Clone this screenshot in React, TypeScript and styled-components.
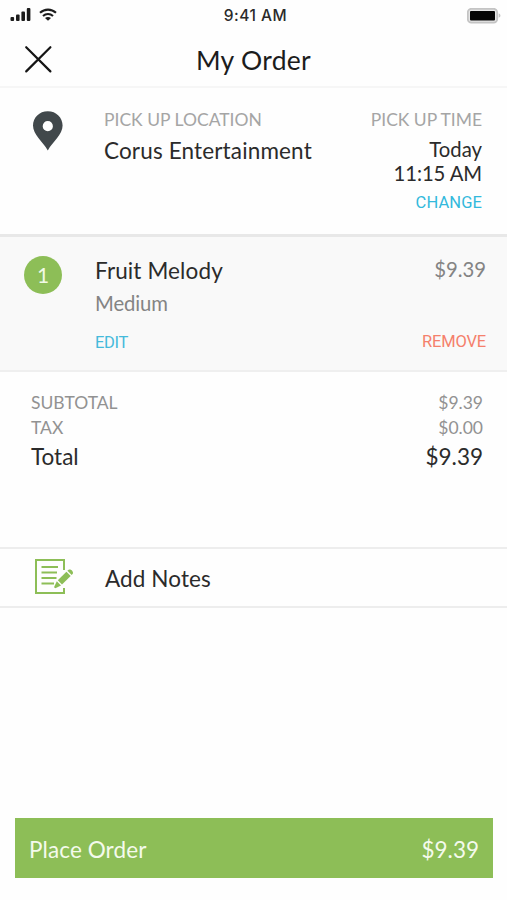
import React from "react";
import styled, { createGlobalStyle } from "styled-components";

const GlobalStyle = createGlobalStyle`
  *, *::before, *::after { box-sizing: border-box; }
  body { margin: 0; background: #fff; }
`;

const green = "#8dbe57";

const Screen = styled.main`
  display: flex;
  flex-direction: column;
  width: 507px;
  height: 900px;
  background: #fefefe;
  font-family: Lato, sans-serif;
  color: #2b2b2b;
`;

const StatusBar = styled.div`
  display: grid;
  grid-template-columns: 1fr auto 1fr;
  align-items: center;
  height: 30px;
  padding: 0 6px 0 10px;
`;

const Signals = styled.div`
  display: flex;
  align-items: center;
  gap: 8px;
  padding-bottom: 2px;
`;

const Clock = styled.span`
  font: 500 15.5px/30px Inter, sans-serif;
  letter-spacing: 0.5px;
  color: #2a2a2a;
  white-space: nowrap;
  padding-top: 1px;
`;

const BatteryIcon = styled.svg`
  justify-self: end;
`;

const Header = styled.header`
  display: grid;
  grid-template-columns: 80px 1fr 80px;
  align-items: center;
  height: 58px;
  border-bottom: 2px solid #f6f6f6;
`;

const CloseButton = styled.button`
  display: flex;
  width: 28px;
  height: 28px;
  margin: 2px 0 0 24px;
  padding: 0;
  border: 0;
  background: none;
`;

const Title = styled.h1`
  margin: 0;
  padding-top: 4px;
  font-size: 26.5px;
  font-weight: 400;
  line-height: 40px;
  letter-spacing: 0.3px;
  text-align: center;
  color: #1c1c1c;
`;

const Text = styled.span<{ $size: number; $line: number; $color?: string; $spacing?: number }>`
  display: block;
  font-size: ${(p) => p.$size}px;
  line-height: ${(p) => p.$line}px;
  color: ${(p) => p.$color ?? "#2b2b2b"};
  letter-spacing: ${(p) => p.$spacing ?? 0}px;
  white-space: nowrap;
`;

const Action = styled.button<{ $color: string; $spacing?: number }>`
  margin: 0;
  padding: 0;
  border: 0;
  background: none;
  font: 400 16.5px/24px Roboto, sans-serif;
  letter-spacing: ${(p) => p.$spacing ?? 0}px;
  color: ${(p) => p.$color};
`;

const Pickup = styled.section`
  display: grid;
  grid-template-columns: 72px 1fr auto;
  height: 149px;
  padding: 20px 25px 0 32px;
  border-bottom: 3px solid #e8e8e8;
`;

const PinIcon = styled.svg`
  margin-top: 2px;
`;

const Stack = styled.div<{ $end?: boolean; $gap?: number }>`
  display: flex;
  flex-direction: column;
  align-items: ${(p) => (p.$end ? "flex-end" : "flex-start")};
  gap: ${(p) => p.$gap ?? 0}px;
`;

const PickupTime = styled.div`
  padding: 5px 0 6px;
  text-align: right;
`;

const Item = styled.section`
  display: grid;
  grid-template-columns: 71px 1fr auto;
  height: 135px;
  padding: 18px 21px 0 24px;
  background: #f9f9f9;
  border-bottom: 2px solid #efefef;
`;

const Quantity = styled.span`
  display: flex;
  align-items: center;
  justify-content: center;
  width: 38px;
  height: 38px;
  margin-top: 0.5px;
  border-radius: 50%;
  background: ${green};
  color: #f1f9e6;
  font-size: 21px;
`;

const ItemColumn = styled.div<{ $end?: boolean }>`
  display: flex;
  flex-direction: column;
  justify-content: space-between;
  align-items: ${(p) => (p.$end ? "flex-end" : "flex-start")};
  height: ${(p) => (p.$end ? 99 : 100)}px;
  padding-top: ${(p) => (p.$end ? 0 : 2)}px;
`;

const Summary = styled.section`
  height: 175px;
  padding: 18px 24px 0 31px;
`;

const SummaryRow = styled.div`
  display: flex;
  justify-content: space-between;
`;

const Notes = styled.section`
  display: flex;
  align-items: center;
  gap: 31px;
  height: 61px;
  padding: 2px 0 0 34px;
  border: solid #ededed;
  border-width: 2px 0;
`;

const NotesIcon = styled.svg`
  margin-top: -4px;
`;

const PlaceOrder = styled.button`
  display: flex;
  align-items: center;
  justify-content: space-between;
  height: 60px;
  margin: auto 14px 22px 15px;
  padding: 4px 14px 0;
  border: 0;
  background: ${green};
  font-family: inherit;
`;

export default function App() {
  return (
    <>
      <GlobalStyle />
      <Screen>
        <StatusBar>
          <Signals>
            <svg width="21" height="14" viewBox="0 0 21 14" fill="#1c1c1c">
              <rect x="0.5" y="9" width="3.6" height="4" rx="1" />
              <rect x="6" y="6.5" width="3.6" height="6.5" rx="1" />
              <rect x="11.4" y="3.5" width="3.6" height="9.5" rx="1" />
              <rect x="16.8" y="0" width="3.6" height="13" rx="1" />
            </svg>
            <svg width="18" height="14" viewBox="0 0 18 14" fill="none" stroke="#1c1c1c" strokeWidth="2.1">
              <path d="M1 4.8C5.6 0.5 12.4 0.5 17 4.8" />
              <path d="M4 8C6.9 5.3 11.1 5.3 14 8" />
              <path d="M9 12.8 6 10C7.8 8.5 10.2 8.5 12 10Z" fill="#1c1c1c" stroke="none" />
            </svg>
          </Signals>
          <Clock>9:41 AM</Clock>
          <BatteryIcon width="34" height="16" viewBox="0 0 34 16">
            <rect x="0.8" y="0.8" width="29.4" height="13.8" rx="3.6" fill="#e6e6e6" stroke="#c4c4c4" strokeWidth="1.8" />
            <rect x="3" y="3" width="25" height="9.4" rx="1" fill="#050505" />
            <path d="M31.7 5.6C34 6.2 34 9.2 31.7 9.8Z" fill="#c4c4c4" />
          </BatteryIcon>
        </StatusBar>

        <Header>
          <CloseButton aria-label="Close">
            <svg width="28" height="28" viewBox="0 0 28 28" stroke="#151515" strokeWidth="2.2" strokeLinecap="round">
              <path d="M2.2 2.2 26.4 26.4M26.4 2.2 2.2 26.4" />
            </svg>
          </CloseButton>
          <Title>My Order</Title>
        </Header>

        <Pickup>
          <PinIcon width="32" height="42" viewBox="0 0 32 42">
            <path
              fillRule="evenodd"
              d="M15.8 1.2C7.3 1.2 1 7.6 1 15.6 1 24.5 10.6 31.5 15.8 40.5 21 31.5 30.6 24.5 30.6 15.6 30.6 7.6 24.3 1.2 15.8 1.2ZM15.8 11.1A5.1 5.1 0 1 1 15.8 21.3 5.1 5.1 0 1 1 15.8 11.1Z"
              fill="#41484b"
            />
          </PinIcon>
          <Stack $gap={3}>
            <Text $size={17.5} $line={24} $color="#a5a5a5">PICK UP LOCATION</Text>
            <Text $size={22.5} $line={32} $spacing={0.15}>Corus Entertainment</Text>
          </Stack>
          <Stack $end>
            <Text $size={17.5} $line={24} $color="#a5a5a5" $spacing={-0.04}>PICK UP TIME</Text>
            <PickupTime>
              <Text $size={20.3} $line={24}>Today</Text>
              <Text $size={20.3} $line={24} $spacing={-0.1}>11:15 AM</Text>
            </PickupTime>
            <Action $color="#33b9dc" $spacing={0.1}>CHANGE</Action>
          </Stack>
        </Pickup>

        <Item>
          <Quantity>1</Quantity>
          <ItemColumn>
            <Stack $gap={4}>
              <Text $size={22.5} $line={28} $spacing={0.12}>Fruit Melody</Text>
              <Text $size={20.3} $line={28} $color="#848484" $spacing={-0.1}>Medium</Text>
            </Stack>
            <Action $color="#45badb" $spacing={-0.3}>EDIT</Action>
          </ItemColumn>
          <ItemColumn $end>
            <Text $size={20.3} $line={28} $color="#848484">$9.39</Text>
            <Action $color="#f5806c" $spacing={-0.15}>REMOVE</Action>
          </ItemColumn>
        </Item>

        <Summary>
          <SummaryRow>
            <Text $size={17.5} $line={25} $color="#929292">SUBTOTAL</Text>
            <Text $size={17.5} $line={25} $color="#929292">$9.39</Text>
          </SummaryRow>
          <SummaryRow>
            <Text $size={17.5} $line={26} $color="#929292">TAX</Text>
            <Text $size={17.5} $line={26} $color="#929292">$0.00</Text>
          </SummaryRow>
          <SummaryRow>
            <Text $size={22.5} $line={32}>Total</Text>
            <Text $size={22.5} $line={32}>$9.39</Text>
          </SummaryRow>
        </Summary>

        <Notes>
          <NotesIcon width="40" height="37" viewBox="0 0 40 37" fill="none" stroke={green} strokeWidth="2">
            <path d="M30 12V2H2V35H30V30" />
            <path d="M7.5 9H24M7.5 14.5H23M7.5 20H22.5M7.5 25.5H20" />
            <path d="M23.8 22.2 32.4 13.8 36.7 18 28 26.4Z" fill={green} stroke="none" />
            <path d="M33.4 12.8 34.6 11.8C36.6 10.4 39.9 13.5 38.8 15.8L37.7 17Z" fill={green} stroke="none" />
            <path d="M22.8 23.2 27 27.4 21.4 30.3 20 29.2Z" fill={green} stroke="none" />
          </NotesIcon>
          <Text $size={22.5} $line={32} $spacing={0.1}>Add Notes</Text>
        </Notes>

        <PlaceOrder>
          <Text $size={22.5} $line={32} $color="#f4faec" $spacing={0.1}>Place Order</Text>
          <Text $size={22.5} $line={32} $color="#f4faec">$9.39</Text>
        </PlaceOrder>
      </Screen>
    </>
  );
}
